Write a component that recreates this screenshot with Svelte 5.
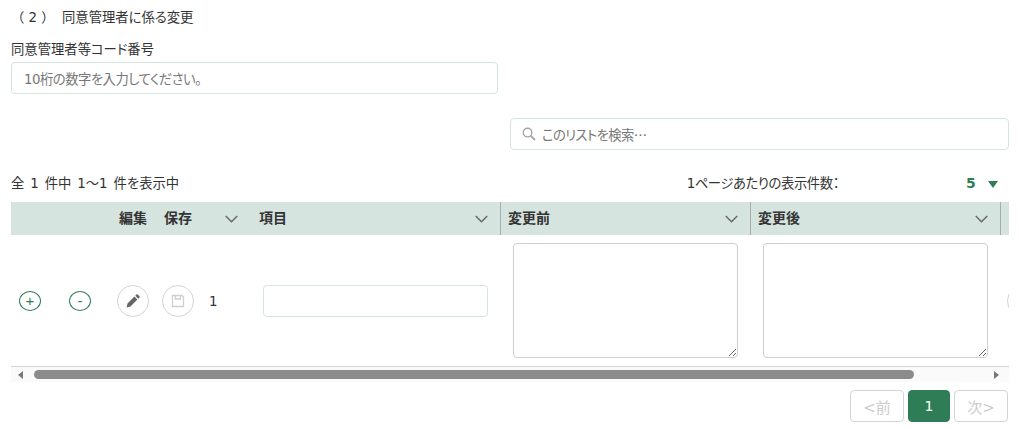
<script>
	const columns = ['変更前', '変更後'];
</script>

<div class="page">
	<h2 class="section"><span class="num">（ 2 ）</span>同意管理者に係る変更</h2>

	<label class="field">
		<span>同意管理者等コード番号</span>
		<input type="text" placeholder="10桁の数字を入力してください。" />
	</label>

	<div class="search">
		<svg viewBox="0 0 14 14" width="14" height="14" fill="none" stroke="#a5a5a5" stroke-width="1.4">
			<circle cx="5.6" cy="5.6" r="4.3" />
			<path d="M8.8 8.8 13 13" stroke-width="1.8" />
		</svg>
		<span>このリストを検索…</span>
	</div>

	<div class="info">
		<span class="count">全 1 件中 1～1 件を表示中</span>
		<div class="per-page">
			<span class="per-label">1ページあたりの表示件数：</span>
			<b>5</b>
			<i class="caret"></i>
		</div>
	</div>

	<div class="table">
		<div class="head">
			<div class="spacer"></div>
			<div class="edit-h">編集</div>
			<div class="save-h">
				保存
				<svg class="chev" viewBox="0 0 12 7"><path d="M.7.7 6 6l5.3-5.3" /></svg>
			</div>
			<div class="col item-h">
				項目
				<svg class="chev" viewBox="0 0 12 7"><path d="M.7.7 6 6l5.3-5.3" /></svg>
			</div>
			{#each columns as c}
				<div class="col bordered">
					{c}
					<svg class="chev" viewBox="0 0 12 7"><path d="M.7.7 6 6l5.3-5.3" /></svg>
				</div>
			{/each}
			<div class="col-rest"></div>
		</div>

		<div class="row">
			<div class="pm"><button class="round">+</button></div>
			<div class="pm"><button class="round">-</button></div>
			<div class="act">
				<button class="circle" aria-label="編集">
					<svg viewBox="0 0 14 14" width="14" height="14">
						<path fill="#666" d="M.6 13.4l.9-3.9 6.9-6.9 3 3-6.9 6.9zM9.3 1.7 10.4.6a1 1 0 0 1 1.4 0l1.6 1.6a1 1 0 0 1 0 1.4l-1.1 1.1z" />
					</svg>
				</button>
			</div>
			<div class="act">
				<button class="circle" aria-label="保存">
					<svg viewBox="0 0 14 14" width="14" height="14" fill="none" stroke="#cfcfcf" stroke-width="1.3">
						<path d="M1.5 1.5h9.5l1.5 1.5v9.5h-11z" />
						<path d="M4.5 1.5v3.5h5V1.5" />
					</svg>
				</button>
			</div>
			<div class="idx">1</div>
			<div class="cell-item"><input type="text" /></div>
			{#each columns as c}
				<div class="cell-text"><textarea aria-label={c}></textarea></div>
			{/each}
			<div class="clip"><span class="circle"></span></div>
		</div>

		<div class="scrollbar">
			<i class="arrow left"></i>
			<div class="thumb"></div>
			<i class="arrow right"></i>
		</div>
	</div>

	<div class="pager">
		<button disabled>&lt;前</button>
		<button class="on">1</button>
		<button disabled>次&gt;</button>
	</div>
</div>

<style>
	:global(body) {
		margin: 0;
		background: #fff;
	}

	.page {
		width: 998px;
		height: 429px;
		margin-left: 11px;
		font: 13.33px/1.4 "DejaVu Sans", "Noto Sans CJK JP", sans-serif;
		font-feature-settings: "palt";
		color: #333;
		overflow: hidden;
	}

	.section {
		margin: 9px 0 0;
		height: 18px;
		font-size: inherit;
		font-weight: 400;
		line-height: 18px;
	}

	.num {
		display: inline-block;
		width: 51px;
		font-feature-settings: normal;
		white-space: nowrap;
	}

	.field {
		display: block;
		margin-top: 14px;
	}

	.field span {
		display: block;
		height: 21px;
		line-height: 18px;
	}

	input,
	textarea {
		box-sizing: border-box;
		background: #fff;
		font: inherit;
		outline: none;
	}

	.field input {
		display: block;
		width: 487px;
		height: 32px;
		padding: 2px 12px 0;
		border: 1px solid #d5e4e0;
		border-radius: 4px;
		font-feature-settings: "palt";
		letter-spacing: -0.5px;
	}

	.field input::placeholder {
		color: #777;
		opacity: 1;
	}

	.search {
		box-sizing: border-box;
		display: flex;
		align-items: center;
		gap: 6px;
		width: 499px;
		height: 32px;
		margin: 24px 0 0 499px;
		padding: 0 11px;
		border: 1px solid #d5e4e0;
		border-radius: 4px;
		font-family: "Noto Sans CJK JP", sans-serif;
		color: #777;
	}

	.search span {
		padding-top: 2px;
		letter-spacing: -0.6px;
	}

	.info {
		display: flex;
		justify-content: space-between;
		align-items: center;
		height: 20px;
		margin-top: 24px;
	}

	.count {
		word-spacing: 1.7px;
	}

	.per-page {
		display: flex;
		align-items: center;
		margin-right: 11px;
	}

	.per-label {
		letter-spacing: -0.4px;
	}

	.per-page b {
		width: 12px;
		margin-left: 127px;
		color: #2e7d57;
		font-size: 14px;
	}

	.caret {
		width: 0;
		height: 0;
		margin-left: 10px;
		border: 5px solid transparent;
		border-top: 7px solid #2e7d57;
		border-bottom: 0;
	}

	.table {
		margin-top: 8px;
	}

	.head {
		display: flex;
		align-items: center;
		height: 33px;
		background: #d5e4de;
		font-size: 14px;
		font-weight: 700;
		color: #333;
	}

	.spacer {
		width: 108px;
	}

	.edit-h {
		width: 45px;
	}

	.save-h {
		display: flex;
		justify-content: space-between;
		align-items: center;
		box-sizing: border-box;
		width: 86px;
		padding-right: 12px;
	}

	.col {
		box-sizing: border-box;
		display: flex;
		justify-content: space-between;
		align-items: center;
		width: 250px;
		height: 33px;
		padding: 0 12px 0 9px;
	}

	.bordered {
		padding-left: 7px;
		border-left: 1px solid #aaa;
	}

	.col-rest {
		flex: 1;
		height: 33px;
		border-left: 1px solid #aaa;
	}

	.chev {
		width: 13px;
		height: 8px;
		fill: none;
		stroke: #666;
		stroke-width: 1.3;
	}

	.row {
		display: flex;
		align-items: center;
		height: 131px;
		border-bottom: 1px solid #d4d4d4;
		overflow: hidden;
	}

	.row > * {
		flex: none;
	}

	.pm {
		width: 50px;
		padding-left: 8px;
		box-sizing: border-box;
	}

	.round {
		display: block;
		width: 22px;
		height: 20px;
		padding: 0;
		border: 1px solid #2e7d57;
		border-radius: 50%;
		background: #fff;
		font: 15px/17px "Liberation Sans", sans-serif;
		color: #2e7d57;
	}

	.act {
		width: 45px;
		padding-left: 6px;
		box-sizing: border-box;
	}

	.circle {
		box-sizing: border-box;
		display: flex;
		justify-content: center;
		align-items: center;
		width: 32px;
		height: 32px;
		padding: 0;
		border: 1px solid #d4d4d4;
		border-radius: 50%;
		background: #fff;
	}

	.idx {
		width: 62px;
		padding: 3px 0 0 8px;
		box-sizing: border-box;
	}

	.cell-item {
		width: 238px;
	}

	.cell-item input {
		display: block;
		width: 225px;
		height: 32px;
		border: 1px solid #d5e4e0;
		border-radius: 4px;
	}

	.cell-text {
		width: 250px;
		padding-left: 12px;
		box-sizing: border-box;
	}

	textarea {
		display: block;
		width: 225px;
		height: 115px;
		border: 1px solid #cfcfcf;
		border-radius: 4px;
	}

	.clip {
		margin-left: 6px;
		width: 32px;
	}

	.scrollbar {
		display: flex;
		align-items: center;
		height: 15px;
		background: #fafafa;
	}

	.thumb {
		width: 880px;
		height: 9px;
		margin-left: 11px;
		border-radius: 5px;
		background: #8b8b8b;
	}

	.arrow {
		width: 0;
		height: 0;
		border: 4px solid transparent;
	}

	.left {
		margin-left: 7px;
		border-left: 0;
		border-right: 5px solid #777;
	}

	.right {
		margin-left: 80px;
		border-right: 0;
		border-left: 5px solid #777;
	}

	.pager {
		display: flex;
		justify-content: flex-end;
		gap: 4px;
		margin: 8px 1px 0 0;
	}

	.pager button {
		box-sizing: border-box;
		width: 54px;
		height: 32px;
		padding: 0;
		border: 1px solid #d4d4d4;
		border-radius: 4px;
		background: #fff;
		font: 15px "DejaVu Sans", "Noto Sans CJK JP", sans-serif;
		color: #ccc;
	}

	.pager .on {
		width: 42px;
		border-color: #2e7d57;
		background: #2e7d57;
		font-size: 14px;
		color: #fff;
	}
</style>
